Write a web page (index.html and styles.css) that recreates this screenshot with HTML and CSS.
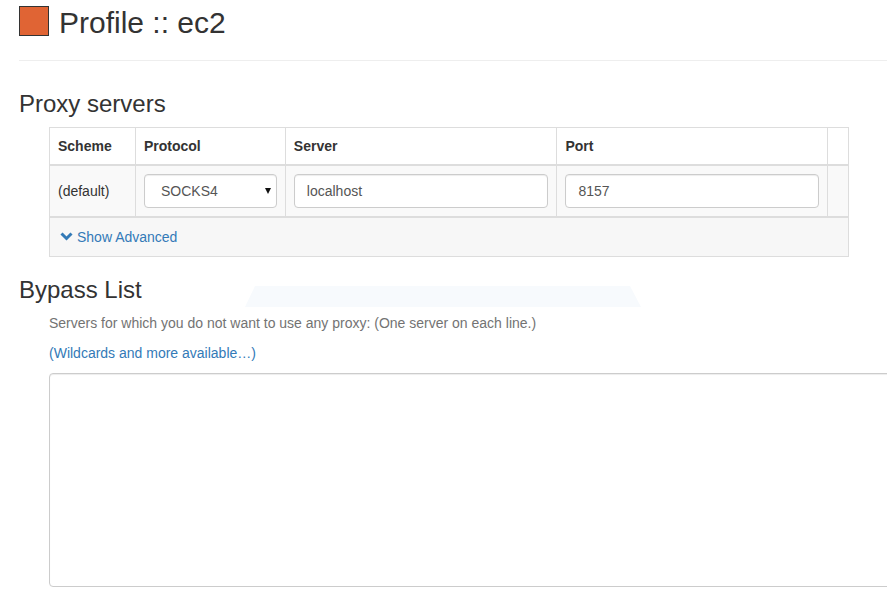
FILE: index.html
```html
<!DOCTYPE html>
<html>
<head>
<meta charset="utf-8">
<title>Profile :: ec2</title>
<link rel="stylesheet" href="styles.css">
</head>
<body>
<div class="page">
  <header class="page-header">
    <span class="swatch"></span>
    <h1 class="title">Profile :: ec2</h1>
  </header>

  <h3 class="section-title first">Proxy servers</h3>
  <div class="indent">
    <table class="proxy-table">
      <thead>
        <tr>
          <th class="col-scheme">Scheme</th>
          <th class="col-protocol">Protocol</th>
          <th class="col-server">Server</th>
          <th class="col-port">Port</th>
          <th class="col-extra"></th>
        </tr>
      </thead>
      <tbody class="rows">
        <tr>
          <td>(default)</td>
          <td>
            <div class="select-wrap">
              <select class="control select"><option>SOCKS4</option></select>
            </div>
          </td>
          <td><input class="control" type="text" value="localhost"></td>
          <td><input class="control" type="text" value="8157"></td>
          <td></td>
        </tr>
      </tbody>
      <tbody class="footer-rows">
        <tr>
          <td colspan="5" class="footer-cell">
            <a class="advanced" href="#">
              <svg class="chevron" width="13" height="9" viewBox="0 0 13 9"><path d="M1.5 1.5 L6.5 6.5 L11.5 1.5" fill="none" stroke="#337ab7" stroke-width="3"/></svg>
              <span>Show Advanced</span>
            </a>
          </td>
        </tr>
      </tbody>
    </table>
  </div>

  <h3 class="section-title second">Bypass List</h3>
  <div class="indent">
    <p class="help">Servers for which you do not want to use any proxy: (One server on each line.)</p>
    <p class="link-line"><a href="#" class="link">(Wildcards and more available…)</a></p>
    <textarea class="bypass"></textarea>
  </div>

  <div class="ghost"></div>
</div>
</body>
</html>
```

FILE: styles.css
```css
* { box-sizing: border-box; }

html, body {
  margin: 0;
  padding: 0;
  background: #fff;
  overflow: hidden;
}

body {
  font-family: "Liberation Sans", Arial, Helvetica, sans-serif;
  font-size: 14px;
  line-height: 20px;
  color: #333;
}

.page {
  position: relative;
  padding-left: 19px;
  width: 887px;
  height: 593px;
  overflow: hidden;
}

.page-header {
  display: flex;
  align-items: flex-start;
  padding-top: 6px;
  padding-bottom: 22px;
  border-bottom: 1px solid #eee;
}

.swatch {
  width: 30px;
  height: 30px;
  background: #e06434;
  border: 1px solid #333;
  flex: none;
}

.title {
  margin: 2px 0 0 10px;
  font-size: 30px;
  line-height: 30px;
  font-weight: normal;
  color: #333;
}

.section-title {
  font-size: 24px;
  line-height: 26px;
  font-weight: normal;
  color: #333;
  margin: 0;
}

.section-title.first { margin: 30px 0 10px; }
.section-title.second { margin: 20px 0 10px; }

.indent { margin-left: 30px; }

.proxy-table {
  width: 800px;
  border-collapse: collapse;
  border: 1px solid #ddd;
}

.proxy-table th,
.proxy-table td {
  border: 1px solid #ddd;
  padding: 8px;
  text-align: left;
  vertical-align: middle;
}

.proxy-table th {
  font-weight: bold;
  border-bottom-width: 2px;
}

.col-scheme { width: 86px; }
.col-protocol { width: 150px; }
.col-server { width: 272px; }
.col-port { width: 271px; }
.col-extra { width: 21px; }

.rows tr { background: #f9f9f9; }

.footer-rows { border-top: 2px solid #ddd; }
.footer-rows tr { background: #f7f7f7; }

.proxy-table .footer-cell {
  height: 39px;
}

.control {
  display: block;
  width: 100%;
  height: 34px;
  padding: 6px 12px;
  font-family: inherit;
  font-size: 14px;
  line-height: 20px;
  color: #555;
  background: #fff;
  border: 1px solid #ccc;
  border-radius: 4px;
  box-shadow: inset 0 1px 1px rgba(0,0,0,.075);
}

.select-wrap { position: relative; }

.select {
  -webkit-appearance: none;
  appearance: none;
  padding-left: 16px;
}

.select-wrap::after {
  content: "";
  position: absolute;
  right: 6px;
  top: 14px;
  border-left: 3.5px solid transparent;
  border-right: 3.5px solid transparent;
  border-top: 6px solid #111;
}

.advanced {
  display: flex;
  align-items: center;
  color: #337ab7;
  text-decoration: none;
}

.chevron {
  margin-left: 2px;
  margin-right: 4px;
  flex: none;
}

.help {
  margin: 0 0 10px;
  color: #737373;
}

.link-line { margin: 0 0 10px; }

.link {
  color: #337ab7;
  text-decoration: none;
}

.bypass {
  display: block;
  width: 900px;
  height: 214px;
  border: 1px solid #ccc;
  border-radius: 4px;
  box-shadow: inset 0 1px 1px rgba(0,0,0,.075);
  resize: none;
  font-family: inherit;
  font-size: 14px;
}

.ghost {
  position: absolute;
  left: 245px;
  top: 286px;
  width: 396px;
  height: 21px;
  background: #f7fafd;
  clip-path: polygon(10px 0, 385px 0, 396px 100%, 0 100%);
}
```
